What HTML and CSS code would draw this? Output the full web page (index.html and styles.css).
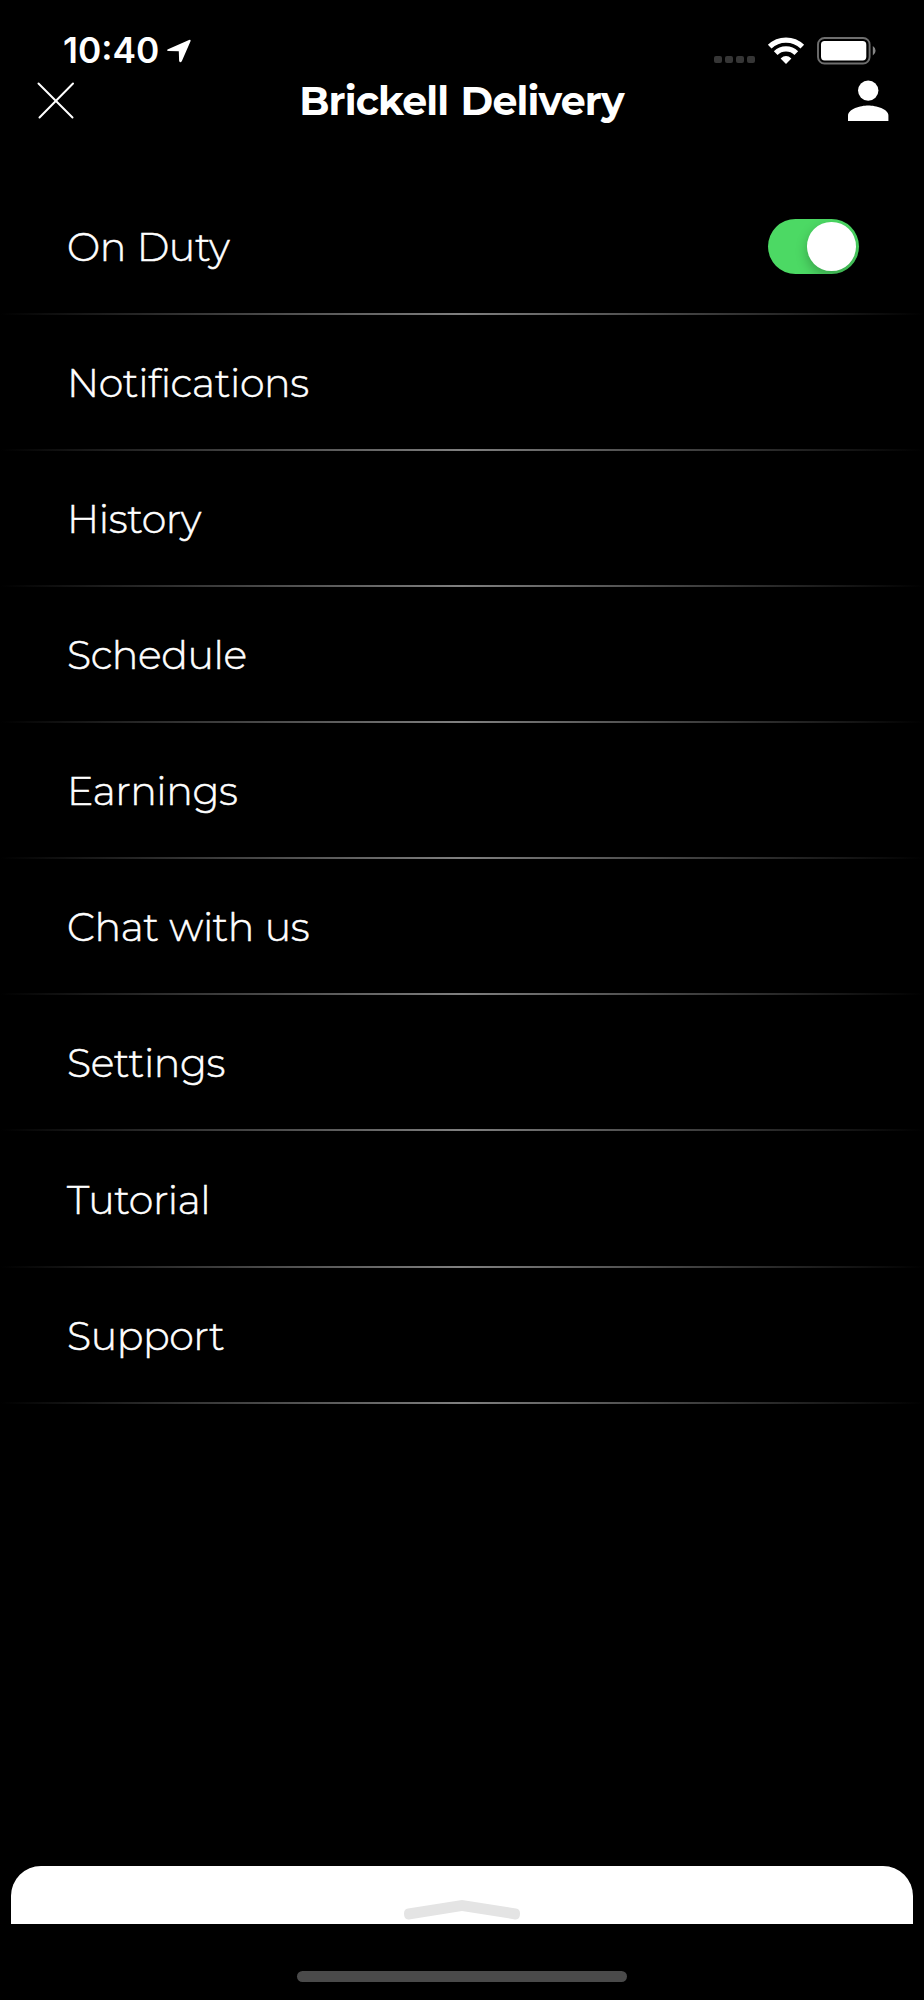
FILE: index.html
```html
<!DOCTYPE html>
<html lang="en">
<head>
    <meta charset="UTF-8">
    <meta name="viewport" content="width=device-width, initial-scale=1.0">
    <title>Brickell Delivery</title>
    <link rel="stylesheet" href="styles.css">
</head>
<body>
    <div class="screen">
        <div class="status-bar">
            <div class="status-left">
                <span class="time">10:40</span>
                <svg class="location" width="26" height="26" viewBox="0 0 26 26">
                    <path d="M2 11.3 L23 2 Q25.2 1.2 24.4 3.4 L15.8 23.2 Q14 25.6 13.1 22.8 L12.8 13.2 L2.6 12.9 Q-0.2 12.4 2 11.3Z" fill="#fff"/>
                </svg>
            </div>
            <div class="status-right">
                <div class="signal">
                    <span></span><span></span><span></span><span></span>
                </div>
                <svg class="wifi" width="38" height="28" viewBox="0 0 38 28">
                    <g fill="none" stroke="#fff" stroke-width="5.2">
                        <path d="M2.7 9.7 A23.4 23.4 0 0 1 35.3 9.7"/>
                        <path d="M8.7 16.1 A14.7 14.7 0 0 1 29.3 16.1"/>
                    </g>
                    <path d="M13.6 21.5 Q19 16.7 24.4 21.5 L19 27Z" fill="#fff"/>
                </svg>
                <svg class="battery" width="60" height="28" viewBox="0 0 60 28">
                    <rect x="1" y="1" width="51.6" height="25.5" rx="6.5" fill="none" stroke="#6e6e6e" stroke-width="1.9"/>
                    <rect x="4" y="4.1" width="45.3" height="19.3" rx="3.6" fill="#fff"/>
                    <path d="M55.8 9 Q58.6 10.6 58.6 13.7 Q58.6 16.8 55.8 18.4Z" fill="#868686"/>
                </svg>
            </div>
        </div>
        <div class="header">
            <svg class="close" width="38" height="38" viewBox="0 0 38 38">
                <path d="M1.5 1.5 L35.5 35.5 M36 1.5 L2.5 35.5" stroke="#fff" stroke-width="2" stroke-linecap="round"/>
            </svg>
            <h1>Brickell Delivery</h1>
            <svg class="person" width="41" height="41" viewBox="0 0 41 41">
                <circle cx="20.2" cy="10.6" r="10.2" fill="#fff"/>
                <path d="M0 41 V35.6 C0 29 12.5 25.6 20.2 25.6 C28 25.6 40.4 29 40.4 35.6 V41Z" fill="#fff"/>
            </svg>
        </div>
        <ul class="menu">
            <li><span>On Duty</span><div class="toggle"><div class="knob"></div></div></li>
            <li><span>Notifications</span></li>
            <li><span>History</span></li>
            <li><span>Schedule</span></li>
            <li><span>Earnings</span></li>
            <li><span>Chat with us</span></li>
            <li><span>Settings</span></li>
            <li><span>Tutorial</span></li>
            <li><span>Support</span></li>
        </ul>
        <div class="sheet">
            <svg width="118" height="22" viewBox="0 0 118 22">
                <path d="M5 9.5 L59 1 L113 9.5 Q117 10.2 117 14.5 Q117 21 112 20.4 L59 12 L6 20.4 Q1 21 1 14.5 Q1 10.2 5 9.5Z" fill="#e4e4e4"/>
            </svg>
        </div>
        <div class="home-bar"></div>
    </div>
</body>
</html>
```
FILE: styles.css
```css
body {
    margin: 0;
    background-color: #000;
    color: #fff;
    font-family: Montserrat, Inter, sans-serif;
}
.screen {
    width: 924px;
    height: 2000px;
    display: flex;
    flex-direction: column;
    overflow: hidden;
}
.status-bar {
    display: flex;
    justify-content: space-between;
    height: 44px;
    padding: 36px 47px 0 63px;
}
.status-left, .status-right {
    display: flex;
    align-items: flex-start;
}
.time {
    font-family: Inter, sans-serif;
    font-size: 35.3px;
    font-weight: 600;
    line-height: 30px;
}
.location {
    margin: 2px 0 0 7px;
}
.signal {
    display: flex;
    gap: 3.4px;
    margin: 20px 12px 0 0;
}
.signal span {
    width: 7.7px;
    height: 7.4px;
    border-radius: 2px;
    background: #363636;
}
.battery {
    margin: 1px 0 0 12px;
}
.wifi {
    margin-top: 1px;
}
.header {
    display: flex;
    justify-content: space-between;
    height: 41px;
    padding: 0 35px 0 37px;
}
.close {
    margin-top: 2px;
}
h1 {
    margin: 0;
    font-size: 39.5px;
    font-weight: 700;
    line-height: 42px;
    letter-spacing: -0.85px;
    word-spacing: 2px;
    white-space: nowrap;
}
.menu {
    list-style: none;
    margin: 57.5px 0 0;
    padding: 0;
    font-size: 39.5px;
    font-weight: 300;
    letter-spacing: -0.4px;
    word-spacing: 1px;
    -webkit-text-stroke: 0.5px #fff;
}
.menu li {
    display: flex;
    justify-content: space-between;
    align-items: center;
    box-sizing: border-box;
    height: 136.15px;
    padding: 0 65px 0 67px;
    background: linear-gradient(90deg, #000, #808080 50%, #000) bottom / 100% 2px no-repeat;
}
.toggle {
    box-sizing: border-box;
    width: 91px;
    height: 55.5px;
    padding: 3.5px;
    border-radius: 28px;
    background: #4cd964;
    overflow: hidden;
}
.knob {
    width: 48.5px;
    height: 48.5px;
    margin-left: auto;
    border-radius: 50%;
    background: #fff;
    box-shadow: 0 5px 12px rgba(0, 0, 0, 0.25);
}
.sheet {
    display: flex;
    justify-content: center;
    align-items: flex-end;
    box-sizing: border-box;
    height: 58px;
    margin: auto 11.3px 0;
    padding-bottom: 3px;
    border-radius: 30px 30px 0 0;
    background: #fff;
}
.home-bar {
    flex: none;
    width: 330px;
    height: 11px;
    margin: 47px auto 18px;
    border-radius: 6px;
    background: #4a4a4a;
}
```
